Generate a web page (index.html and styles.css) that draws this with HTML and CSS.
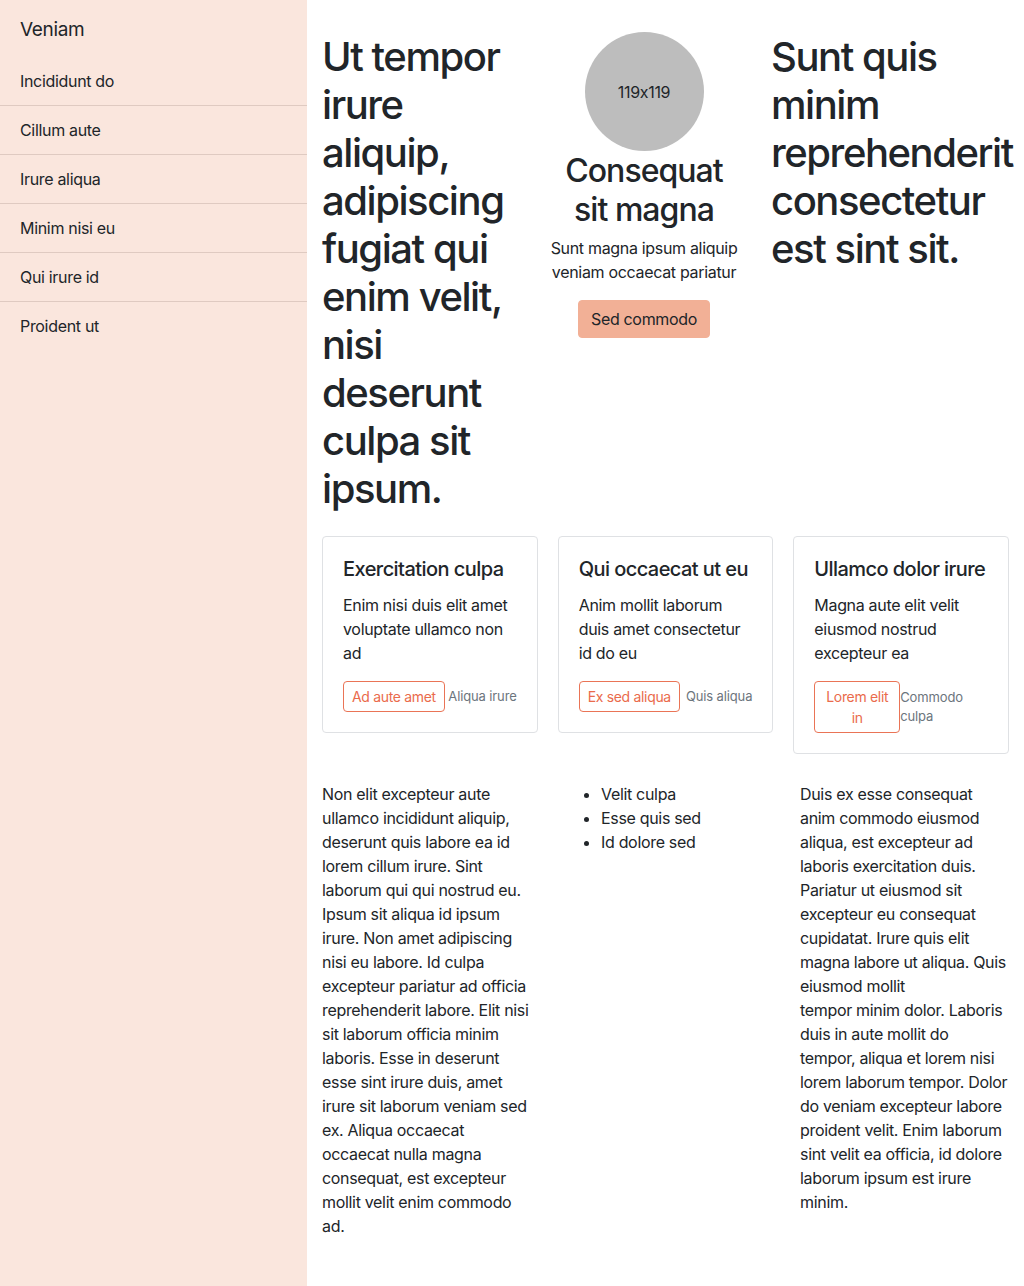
FILE: index.html
```html
<!DOCTYPE html>
<html lang="en">
<head>
<meta charset="utf-8">
<title>Veniam</title>
<link rel="stylesheet" href="styles.css">
</head>
<body>
<div class="layout">
  <aside class="sidebar">
    <div class="brand">Veniam</div>
    <nav class="nav">
      <a class="nav-item" href="#">Incididunt do</a>
      <a class="nav-item" href="#">Cillum aute</a>
      <a class="nav-item" href="#">Irure aliqua</a>
      <a class="nav-item" href="#">Minim nisi eu</a>
      <a class="nav-item" href="#">Qui irure id</a>
      <a class="nav-item" href="#">Proident ut</a>
    </nav>
  </aside>
  <main class="main">
    <section class="hero">
      <h1 class="display">Ut tempor irure aliquip, adipiscing fugiat qui enim velit, nisi deserunt culpa sit ipsum.</h1>
      <div class="feature">
        <div class="avatar">119x119</div>
        <h2 class="feature-title">Consequat sit magna</h2>
        <p class="feature-text">Sunt magna ipsum aliquip veniam occaecat pariatur</p>
        <a class="btn-primary" href="#">Sed commodo</a>
      </div>
      <h1 class="display">Sunt quis minim reprehenderit consectetur est sint sit.</h1>
    </section>
    <section class="cards">
      <div class="card">
        <h5 class="card-title">Exercitation culpa</h5>
        <p class="card-text">Enim nisi duis elit amet voluptate ullamco non ad</p>
        <div class="card-actions">
          <a class="btn-outline" href="#">Ad aute amet</a>
          <small class="muted">Aliqua irure</small>
        </div>
      </div>
      <div class="card">
        <h5 class="card-title">Qui occaecat ut eu</h5>
        <p class="card-text">Anim mollit laborum duis amet consectetur id do eu</p>
        <div class="card-actions">
          <a class="btn-outline" href="#">Ex sed aliqua</a>
          <small class="muted">Quis aliqua</small>
        </div>
      </div>
      <div class="card">
        <h5 class="card-title">Ullamco dolor irure</h5>
        <p class="card-text">Magna aute elit velit eiusmod nostrud excepteur ea</p>
        <div class="card-actions">
          <a class="btn-outline" href="#">Lorem elit in</a>
          <small class="muted">Commodo culpa</small>
        </div>
      </div>
    </section>
    <section class="bottom">
      <p class="body-text">Non elit excepteur aute ullamco incididunt aliquip, deserunt quis labore ea id lorem cillum irure. Sint laborum qui qui nostrud eu. Ipsum sit aliqua id ipsum irure. Non amet adipiscing nisi eu labore. Id culpa excepteur pariatur ad officia reprehenderit labore. Elit nisi sit laborum officia minim laboris. Esse in deserunt esse sint irure duis, amet irure sit laborum veniam sed ex. Aliqua occaecat occaecat nulla magna consequat, est excepteur mollit velit enim commodo ad.</p>
      <ul class="list">
        <li>Velit culpa</li>
        <li>Esse quis sed</li>
        <li>Id dolore sed</li>
      </ul>
      <p class="body-text">Duis ex esse consequat anim commodo eiusmod aliqua, est excepteur ad laboris exercitation duis. Pariatur ut eiusmod sit excepteur eu consequat cupidatat. Irure quis elit magna labore ut aliqua. Quis eiusmod mollit tempor&nbsp;minim&nbsp;dolor. Laboris duis in aute mollit do tempor,&nbsp;aliqua et lorem nisi lorem laborum tempor. Dolor do veniam excepteur labore proident velit. Enim laborum sint velit ea officia, id dolore laborum ipsum est irure minim.</p>
    </section>
  </main>
</div>
</body>
</html>
```
FILE: styles.css
```css
* { box-sizing: border-box; }
html, body { margin: 0; padding: 0; }
body {
  font-family: Inter, "Noto Sans", "Liberation Sans", sans-serif;
  font-feature-settings: "calt" 0;
  font-size: 16px;
  line-height: 24px;
  letter-spacing: -0.02em;
  color: #212529;
  background: #fff;
}
a { text-decoration: none; color: inherit; }

.layout {
  display: flex;
  min-height: 1286px;
}
.sidebar {
  width: 307px;
  flex: 0 0 307px;
  background: #fae6dd;
  padding-top: 15px;
}
.brand {
  font-size: 19px;
  line-height: 30px;
  padding: 0 20px;
  margin-bottom: 12px;
}
.nav { display: flex; flex-direction: column; }
.nav-item {
  display: block;
  padding: 12px 20px;
  line-height: 24px;
  border-bottom: 1px solid #dfcac1;
}
.nav-item:last-child { border-bottom: none; }

.main {
  flex: 1 1 0;
  min-width: 0;
  padding: 32px 15px 40px 15px;
}
.hero {
  display: grid;
  grid-template-columns: 195px 194px minmax(0, 1fr);
  column-gap: 30px;
  align-items: start;
}
.display {
  font-size: 40px;
  line-height: 48px;
  font-weight: 500;
  margin: 1px 0 8px;
  letter-spacing: -0.036em;
}
.feature {
  display: flex;
  flex-direction: column;
  align-items: center;
  text-align: center;
}
.avatar {
  width: 119px;
  height: 119px;
  border-radius: 50%;
  background: #bdbdbd;
  display: flex;
  align-items: center;
  justify-content: center;
  font-size: 16px;
  color: #212529;
}
.feature-title {
  font-size: 32px;
  line-height: 38.5px;
  font-weight: 500;
  letter-spacing: -0.03em;
  margin: 1px 0 7px;
}
.feature-text {
  margin: 0 0 16px;
}
.btn-primary {
  display: inline-block;
  background: #f2b096;
  border: 1px solid #f2b096;
  border-radius: 4px;
  padding: 6px 12px;
  line-height: 24px;
}

.cards {
  display: grid;
  grid-template-columns: repeat(3, minmax(0, 1fr));
  column-gap: 20px;
  align-items: start;
  margin-top: 15px;
}
.card {
  border: 1px solid #dfe1e4;
  border-radius: 4px;
  padding: 20px;
  min-width: 0;
}
.card-title {
  font-size: 20px;
  line-height: 24px;
  font-weight: 500;
  letter-spacing: -0.028em;
  margin: 0 0 12px;
}
.card-text {
  margin: 0 0 16px;
}
.card-actions {
  display: flex;
  justify-content: space-between;
  align-items: center;
}
.btn-outline {
  display: inline-block;
  border: 1px solid #ea7456;
  color: #ea6b4c;
  border-radius: 4px;
  padding: 4px 8px;
  font-size: 14px;
  line-height: 21px;
  text-align: center;
}
.muted {
  color: #6c757d;
  font-size: 13px;
  line-height: 19px;
  letter-spacing: -0.01em;
}

.bottom {
  display: grid;
  grid-template-columns: repeat(3, minmax(0, 1fr));
  column-gap: 30px;
  align-items: start;
  margin-top: 28px;
}
.body-text { margin: 0; }
.list {
  margin: 0;
  padding-left: 40px;
}
```
